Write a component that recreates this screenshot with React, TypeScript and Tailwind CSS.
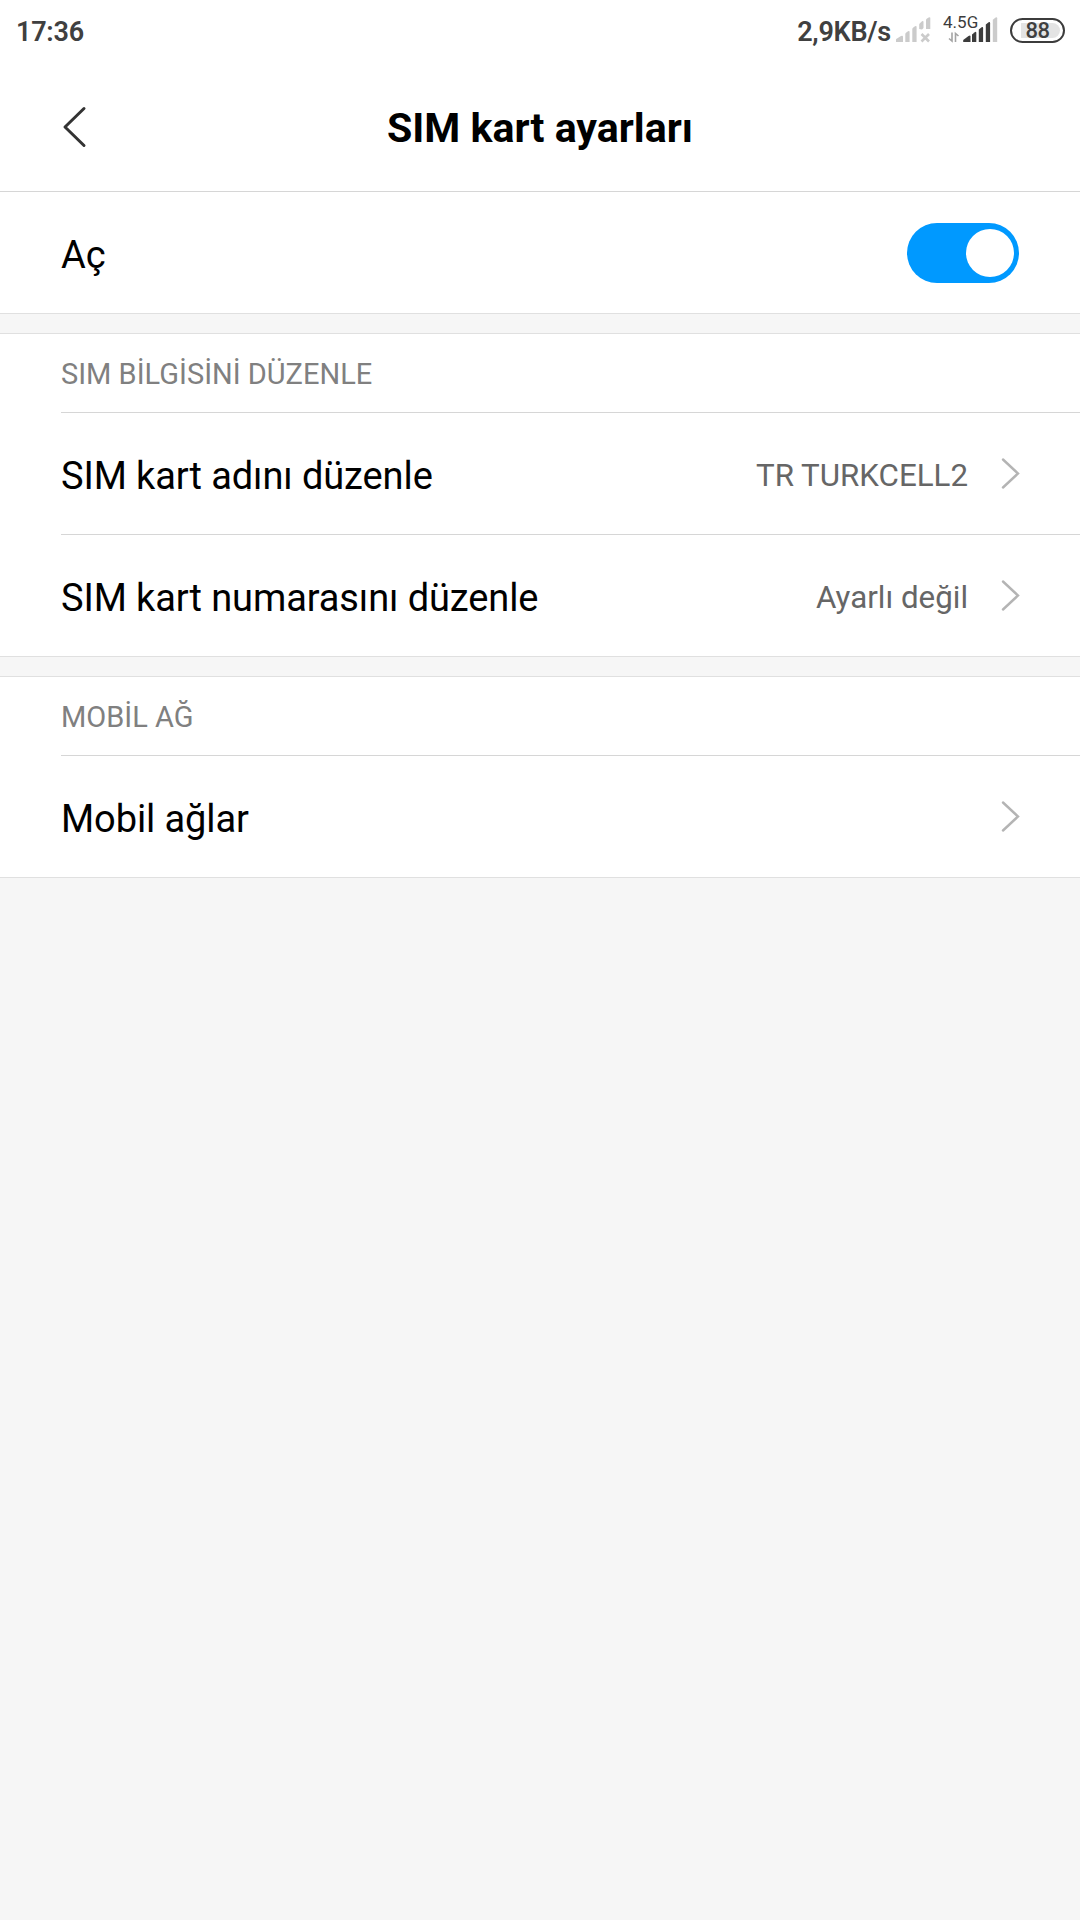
import type { ReactNode } from "react";

function NoSignalIcon() {
  return (
    <svg width="36" height="28" viewBox="0 0 36 28" className="shrink-0" fill="#cbcbcb">
      <path d="M0 25 V22.5 Q0 22 1 21.5 L5 19 Q7 18 7 20 V25 Z" />
      <path d="M9.3 25 V17 Q9.3 16 10.3 15.4 L12 14.3 Q13.6 13.5 13.6 15 V25 Z" />
      <path d="M16.3 25 V12 Q16.3 11 17.3 10.4 L19 9.3 Q20.6 8.5 20.6 10 V25 Z" />
      <path d="M23.2 12 V7.5 Q23.2 6.5 24.2 5.9 L26 4.3 Q27.5 3.5 27.5 5 V11 L26 12.5 Z" />
      <path d="M30 12 V3 Q30 2 31 1.4 L32.7 0.4 Q34.3 -0.3 34.3 1 V12 Z" />
      <path d="M25.5 17 L33 24.5 M33 17 L25.5 24.5" stroke="#cbcbcb" strokeWidth="2.6" />
    </svg>
  );
}

function SignalIcon() {
  return (
    <svg width="55" height="44" viewBox="0 -8 55 44" className="shrink-0" fill="#3c3c3c">
      <text x="0" y="10.8" fontSize="17" fontWeight="400" textLength="35" fontFamily="Roboto, sans-serif">
        4.5G
      </text>
      <path d="M9 15.5 V24 L6 21.5 M12.5 25 V16.5 L15.5 19" stroke="#a4a4a4" strokeWidth="1.6" fill="none" />
      <path d="M20.2 25 V23 L25.5 19 Q27.5 17.8 27.5 19.5 V25 Z" />
      <path d="M29 25 V17.5 L31.8 15.2 Q33.3 14.2 33.3 16 V25 Z" />
      <path d="M35.8 25 V12.5 L38.6 10.3 Q40.1 9.4 40.1 11 V25 Z" />
      <path d="M42.8 25 V7.5 L45.6 5.3 Q47.1 4.4 47.1 6 V25 Z" />
      <path d="M49.8 25 V2.8 L52.6 0.6 Q54.2 -0.3 54.2 1.3 V25 Z" fill="#cbcbcb" />
    </svg>
  );
}

function Battery({ level }: { level: number }) {
  return (
    <div className="relative mb-px h-[25px] w-[55px] rounded-full border-2 border-[#3c3c3c]">
      <div className="absolute top-[3px] left-[9px] h-[15px] w-[39px] rounded-r-full bg-[#e4e4e4]" />
      <span className="absolute inset-0 flex items-center justify-center pt-px text-[22px] leading-none font-medium tracking-[-0.5px]">
        {level}
      </span>
    </div>
  );
}

function StatusBar() {
  return (
    <div className="flex h-[62px] items-center pr-[15px] pl-4 text-[27px] font-semibold tracking-[-0.25px] text-[#404040]">
      <span className="pt-[2px]">17:36</span>
      <div className="ml-auto flex items-center">
        <span className="mr-[5px] pt-[2px]">2,9KB/s</span>
        <NoSignalIcon />
        <span className="w-[11px]" />
        <SignalIcon />
        <span className="w-[12px]" />
        <Battery level={88} />
      </div>
    </div>
  );
}

function Chevron() {
  return (
    <svg width="19" height="32" viewBox="0 0 19 32" fill="none" className="ml-[33px]">
      <path d="M2 1.5 L17 15.5 L2 29.5" stroke="#b4b4b4" strokeWidth="2.4" strokeLinecap="round" />
    </svg>
  );
}

function Row({ label, value }: { label: string; value?: string }) {
  return (
    <div className="ml-[61px] flex h-[122px] items-center border-t border-[#d6d6d6] pr-[60px]">
      <span className="pt-[6px] text-[38px] tracking-[-0.1px]">{label}</span>
      <span className="ml-auto pt-[5px] text-[31.3px] text-[#666666]">{value}</span>
      <Chevron />
    </div>
  );
}

function Section({ title, children }: { title: string; children: ReactNode }) {
  return (
    <section className="mt-[19px] border-y border-[#e0e0e0] bg-white">
      <h2 className="flex h-[78px] items-center pt-[4px] pl-[61px] text-[29px] text-[#808080]">{title}</h2>
      {children}
    </section>
  );
}

export default function App() {
  return (
    <div className="h-[1920px] w-[1080px] overflow-hidden bg-[#f6f6f6] font-[Roboto,sans-serif] text-black">
      <header className="border-b border-[#d6d6d6] bg-white">
        <StatusBar />
        <div className="grid h-[129px] grid-cols-[1fr_auto_1fr] items-center px-[62px]">
          <svg width="26" height="42" viewBox="0 0 26 42" fill="none">
            <path d="M22 2.5 L3 21 L22 39.5" stroke="#333333" strokeWidth="3" strokeLinecap="round" strokeLinejoin="round" />
          </svg>
          <h1 className="pt-[4px] text-[41.1px] font-bold">SIM kart ayarları</h1>
        </div>
      </header>
      <div className="flex h-[122px] items-center justify-between border-b border-[#e0e0e0] bg-white pr-[61px] pl-[61px]">
        <span className="pt-[6px] text-[38px]">Aç</span>
        <div className="flex h-[60px] w-[112px] items-center justify-end rounded-full bg-[#0099ff] pr-[5px]">
          <div className="size-12 rounded-full bg-white" />
        </div>
      </div>
      <Section title="SIM BİLGİSİNİ DÜZENLE">
        <Row label="SIM kart adını düzenle" value="TR TURKCELL2" />
        <Row label="SIM kart numarasını düzenle" value="Ayarlı değil" />
      </Section>
      <Section title="MOBİL AĞ">
        <Row label="Mobil ağlar" />
      </Section>
    </div>
  );
}
